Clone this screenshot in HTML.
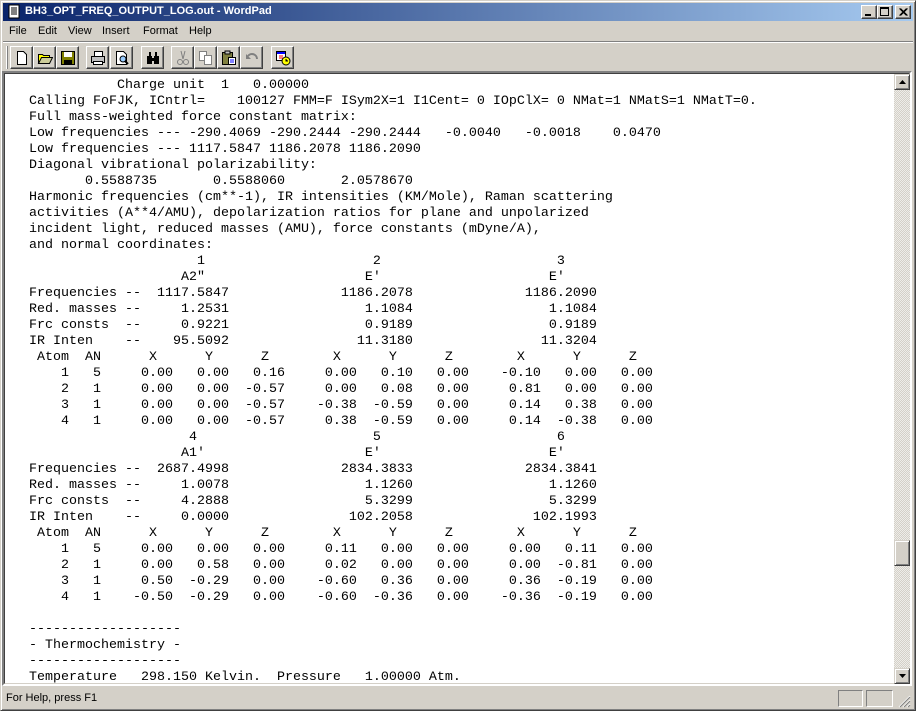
<!DOCTYPE html>
<html><head><meta charset="utf-8"><style>
*{margin:0;padding:0;box-sizing:border-box}
body{width:916px;height:711px;background:#d4d0c8;position:relative;overflow:hidden;font-family:Tahoma,"Liberation Sans",sans-serif;font-size:11px;color:#000}
.abs{position:absolute}
#win{left:0;top:0;width:916px;height:711px;border:1px solid;border-color:#d4d0c8 #404040 #404040 #d4d0c8;box-shadow:inset 1px 1px 0 #fff,inset -1px -1px 0 #808080}
#title{left:3px;top:3px;width:910px;height:18px;background:linear-gradient(to right,#0a246a,#a6caf0)}
#title span{position:absolute;left:22px;top:2px;color:#fff;font-weight:bold;font-size:11px;font-family:"Liberation Sans",sans-serif}
.cb{position:absolute;top:2px;width:16px;height:14px;background:#d4d0c8;border:1px solid;border-color:#fff #404040 #404040 #fff;box-shadow:inset -1px -1px 0 #808080}
#menu{left:3px;top:22px;height:18px}
#menu span{position:absolute;top:3px;font-family:"Liberation Sans",sans-serif;font-size:11px}
.sep{height:2px;border-top:1px solid #808080;border-bottom:1px solid #fff}
.btn{position:absolute;top:46px;width:23px;height:23px;border:1px solid;border-color:#fff #404040 #404040 #fff;box-shadow:inset -1px -1px 0 #808080}
.btn svg{position:absolute;left:3px;top:3px}
#edit{left:2px;top:71px;width:910px;height:615px;border:2px solid;border-color:#808080 #fff #fff #808080;background:#fff}
#edit .in{position:absolute;left:0;top:0;right:0;bottom:0;border:1px solid;border-color:#404040 #d4d0c8 #d4d0c8 #404040}
pre{position:absolute;left:25px;top:5px;font-family:"Liberation Mono","Courier New",monospace;font-size:13.33px;line-height:16px;color:#000}
#sb{left:894px;top:74px;width:16px;height:610px;background-color:#eeede9;background-image:linear-gradient(45deg,#d4d0c8 25%,transparent 25%,transparent 75%,#d4d0c8 75%),linear-gradient(45deg,#d4d0c8 25%,transparent 25%,transparent 75%,#d4d0c8 75%);background-size:2px 2px;background-position:0 0,1px 1px}
.sbb{position:absolute;left:0;width:16px;height:16px;background:#d4d0c8;border:1px solid;border-color:#d4d0c8 #404040 #404040 #d4d0c8;box-shadow:inset 1px 1px 0 #fff,inset -1px -1px 0 #808080}
.pan{position:absolute;top:690px;height:17px;border:1px solid;border-color:#808080 #fff #fff #808080}
</style></head><body>
<div id="win" class="abs"></div>
<div id="title" class="abs">
<svg class="abs" style="left:3px;top:1px" width="16" height="16"><rect x="3" y="1" width="10" height="13" fill="#fff" stroke="#000"/><path d="M5 4h6M5 6h6M5 8h6M5 10h6" stroke="#000"/></svg>
<span>BH3_OPT_FREQ_OUTPUT_LOG.out - WordPad</span>
<div class="cb" style="left:858px"><div class="abs" style="left:3px;top:8px;width:6px;height:2px;background:#000"></div></div>
<div class="cb" style="left:874px"><div class="abs" style="left:2px;top:1px;width:9px;height:9px;border:1px solid #000;border-top-width:2px"></div></div>
<div class="cb" style="left:892px"><svg class="abs" style="left:3px;top:2px" width="9" height="8"><path d="M0.5 0.5l7 7M7.5 0.5l-7 7M1.5 0.5l7 7M8.5 0.5l-7 7" stroke="#000"/></svg></div>
</div>
<div id="menu" class="abs">
<span style="left:6px">File</span><span style="left:35px">Edit</span><span style="left:65px">View</span><span style="left:99px">Insert</span><span style="left:140px">Format</span><span style="left:186px">Help</span>
</div>
<div class="abs sep" style="left:3px;top:41px;width:910px"></div>
<div class="abs" style="left:6px;top:46px;width:2px;height:23px;border-left:1px solid #fff;border-right:1px solid #808080"></div>
<div class="btn" style="left:10px"><svg width="16" height="16"><path d="M3.5 1.5h6l3 3v10h-9z" fill="#fff" stroke="#000"/></svg></div>
<div class="btn" style="left:33px"><svg width="16" height="16"><path d="M1.5 4.5h4l1 1h6v8h-11z" fill="#ff0" stroke="#000"/><path d="M1.5 13.5l3-6h11l-3 6z" fill="#cc9" stroke="#000"/></svg></div>
<div class="btn" style="left:56px"><svg width="16" height="16"><rect x="1.5" y="1.5" width="13" height="13" fill="#808000" stroke="#000"/><rect x="4" y="2" width="8" height="5" fill="#fff"/><rect x="4" y="10" width="8" height="4" fill="#000"/></svg></div>
<div class="btn" style="left:86px"><svg width="16" height="16"><rect x="4.5" y="1.5" width="8" height="5" fill="#fff" stroke="#000"/><rect x="1.5" y="6.5" width="13" height="6" fill="#c0c0c0" stroke="#000"/><rect x="3.5" y="11.5" width="9" height="3" fill="#fff" stroke="#000"/></svg></div>
<div class="btn" style="left:110px"><svg width="16" height="16"><path d="M2.5 1.5h7l3 3v10h-10z" fill="#fff" stroke="#000"/><circle cx="9" cy="9" r="3" fill="#9cf" stroke="#000"/><path d="M11 11l3 3" stroke="#000" stroke-width="2"/></svg></div>
<div class="btn" style="left:141px"><svg width="16" height="16"><path d="M2 6h5v8h-5zM9 6h5v8h-5zM4 2h2v4h-2zM10 2h2v4h-2zM6 8h4v3h-4z" fill="#000"/></svg></div>
<div class="btn" style="left:171px"><svg width="16" height="16"><path d="M6 1l2 8M10 1l-2 8" stroke="#808080"/><circle cx="5" cy="12" r="2.5" fill="none" stroke="#808080"/><circle cx="11" cy="12" r="2.5" fill="none" stroke="#808080"/></svg></div>
<div class="btn" style="left:194px"><svg width="16" height="16"><rect x="1.5" y="1.5" width="7" height="9" fill="#fff" stroke="#808080"/><rect x="6.5" y="5.5" width="7" height="9" fill="#fff" stroke="#808080"/></svg></div>
<div class="btn" style="left:217px"><svg width="16" height="16"><rect x="1.5" y="2.5" width="10" height="12" fill="#808040" stroke="#000"/><rect x="4" y="1" width="5" height="3" fill="#c0c0c0" stroke="#000"/><rect x="7.5" y="7.5" width="7" height="7" fill="#fff" stroke="#000"/><path d="M9 10h4M9 12h4" stroke="#00f"/></svg></div>
<div class="btn" style="left:240px"><svg width="16" height="16"><path d="M4 6a5 5 0 0 1 9 3" fill="none" stroke="#808080" stroke-width="2"/><path d="M2 4v5h5z" fill="#808080"/></svg></div>
<div class="btn" style="left:271px"><svg width="16" height="16"><rect x="1.5" y="1.5" width="9" height="9" fill="#fff" stroke="#000"/><rect x="2" y="2" width="8" height="2" fill="#00f"/><path d="M4 6h4M4 8h4" stroke="#f00"/><circle cx="11" cy="11" r="4" fill="#ff0" stroke="#000"/><path d="M11 9v2h2" stroke="#000"/></svg></div>
<div id="edit" class="abs"><div class="in"></div>
<pre>           Charge unit  1   0.00000
Calling FoFJK, ICntrl=    100127 FMM=F ISym2X=1 I1Cent= 0 IOpClX= 0 NMat=1 NMatS=1 NMatT=0.
Full mass-weighted force constant matrix:
Low frequencies --- -290.4069 -290.2444 -290.2444   -0.0040   -0.0018    0.0470
Low frequencies --- 1117.5847 1186.2078 1186.2090
Diagonal vibrational polarizability:
       0.5588735       0.5588060       2.0578670
Harmonic frequencies (cm**-1), IR intensities (KM/Mole), Raman scattering
activities (A**4/AMU), depolarization ratios for plane and unpolarized
incident light, reduced masses (AMU), force constants (mDyne/A),
and normal coordinates:
                     1                     2                      3
                   A2"                    E'                     E'
Frequencies --  1117.5847              1186.2078              1186.2090
Red. masses --     1.2531                 1.1084                 1.1084
Frc consts  --     0.9221                 0.9189                 0.9189
IR Inten    --    95.5092                11.3180                11.3204
 Atom  AN      X      Y      Z        X      Y      Z        X      Y      Z
    1   5     0.00   0.00   0.16     0.00   0.10   0.00    -0.10   0.00   0.00
    2   1     0.00   0.00  -0.57     0.00   0.08   0.00     0.81   0.00   0.00
    3   1     0.00   0.00  -0.57    -0.38  -0.59   0.00     0.14   0.38   0.00
    4   1     0.00   0.00  -0.57     0.38  -0.59   0.00     0.14  -0.38   0.00
                    4                      5                      6
                   A1'                    E'                     E'
Frequencies --  2687.4998              2834.3833              2834.3841
Red. masses --     1.0078                 1.1260                 1.1260
Frc consts  --     4.2888                 5.3299                 5.3299
IR Inten    --     0.0000               102.2058               102.1993
 Atom  AN      X      Y      Z        X      Y      Z        X      Y      Z
    1   5     0.00   0.00   0.00     0.11   0.00   0.00     0.00   0.11   0.00
    2   1     0.00   0.58   0.00     0.02   0.00   0.00     0.00  -0.81   0.00
    3   1     0.50  -0.29   0.00    -0.60   0.36   0.00     0.36  -0.19   0.00
    4   1    -0.50  -0.29   0.00    -0.60  -0.36   0.00    -0.36  -0.19   0.00

-------------------
- Thermochemistry -
-------------------
Temperature   298.150 Kelvin.  Pressure   1.00000 Atm.</pre>
</div>
<div id="sb" class="abs">
<div class="sbb" style="top:0"><svg class="abs" style="left:4px;top:5px" width="7" height="4"><path d="M3.5 0L7 4H0z" fill="#000"/></svg></div>
<div class="sbb" style="top:466px;height:26px"></div>
<div class="sbb" style="top:594px"><svg class="abs" style="left:4px;top:5px" width="7" height="4"><path d="M0 0h7L3.5 4z" fill="#000"/></svg></div>
</div>
<div class="abs" style="left:6px;top:692px;font-family:'Liberation Sans',sans-serif;font-size:11px">For Help, press F1</div>
<div class="pan" style="left:838px;width:25px"></div>
<div class="pan" style="left:866px;width:27px"></div>
<svg class="abs" style="left:898px;top:695px" width="13" height="13"><path d="M12 1L1 12M12 5L5 12M12 9L9 12" stroke="#fff"/><path d="M12 2L2 12M12 6L6 12M12 10L10 12" stroke="#808080"/></svg>
</body></html>
